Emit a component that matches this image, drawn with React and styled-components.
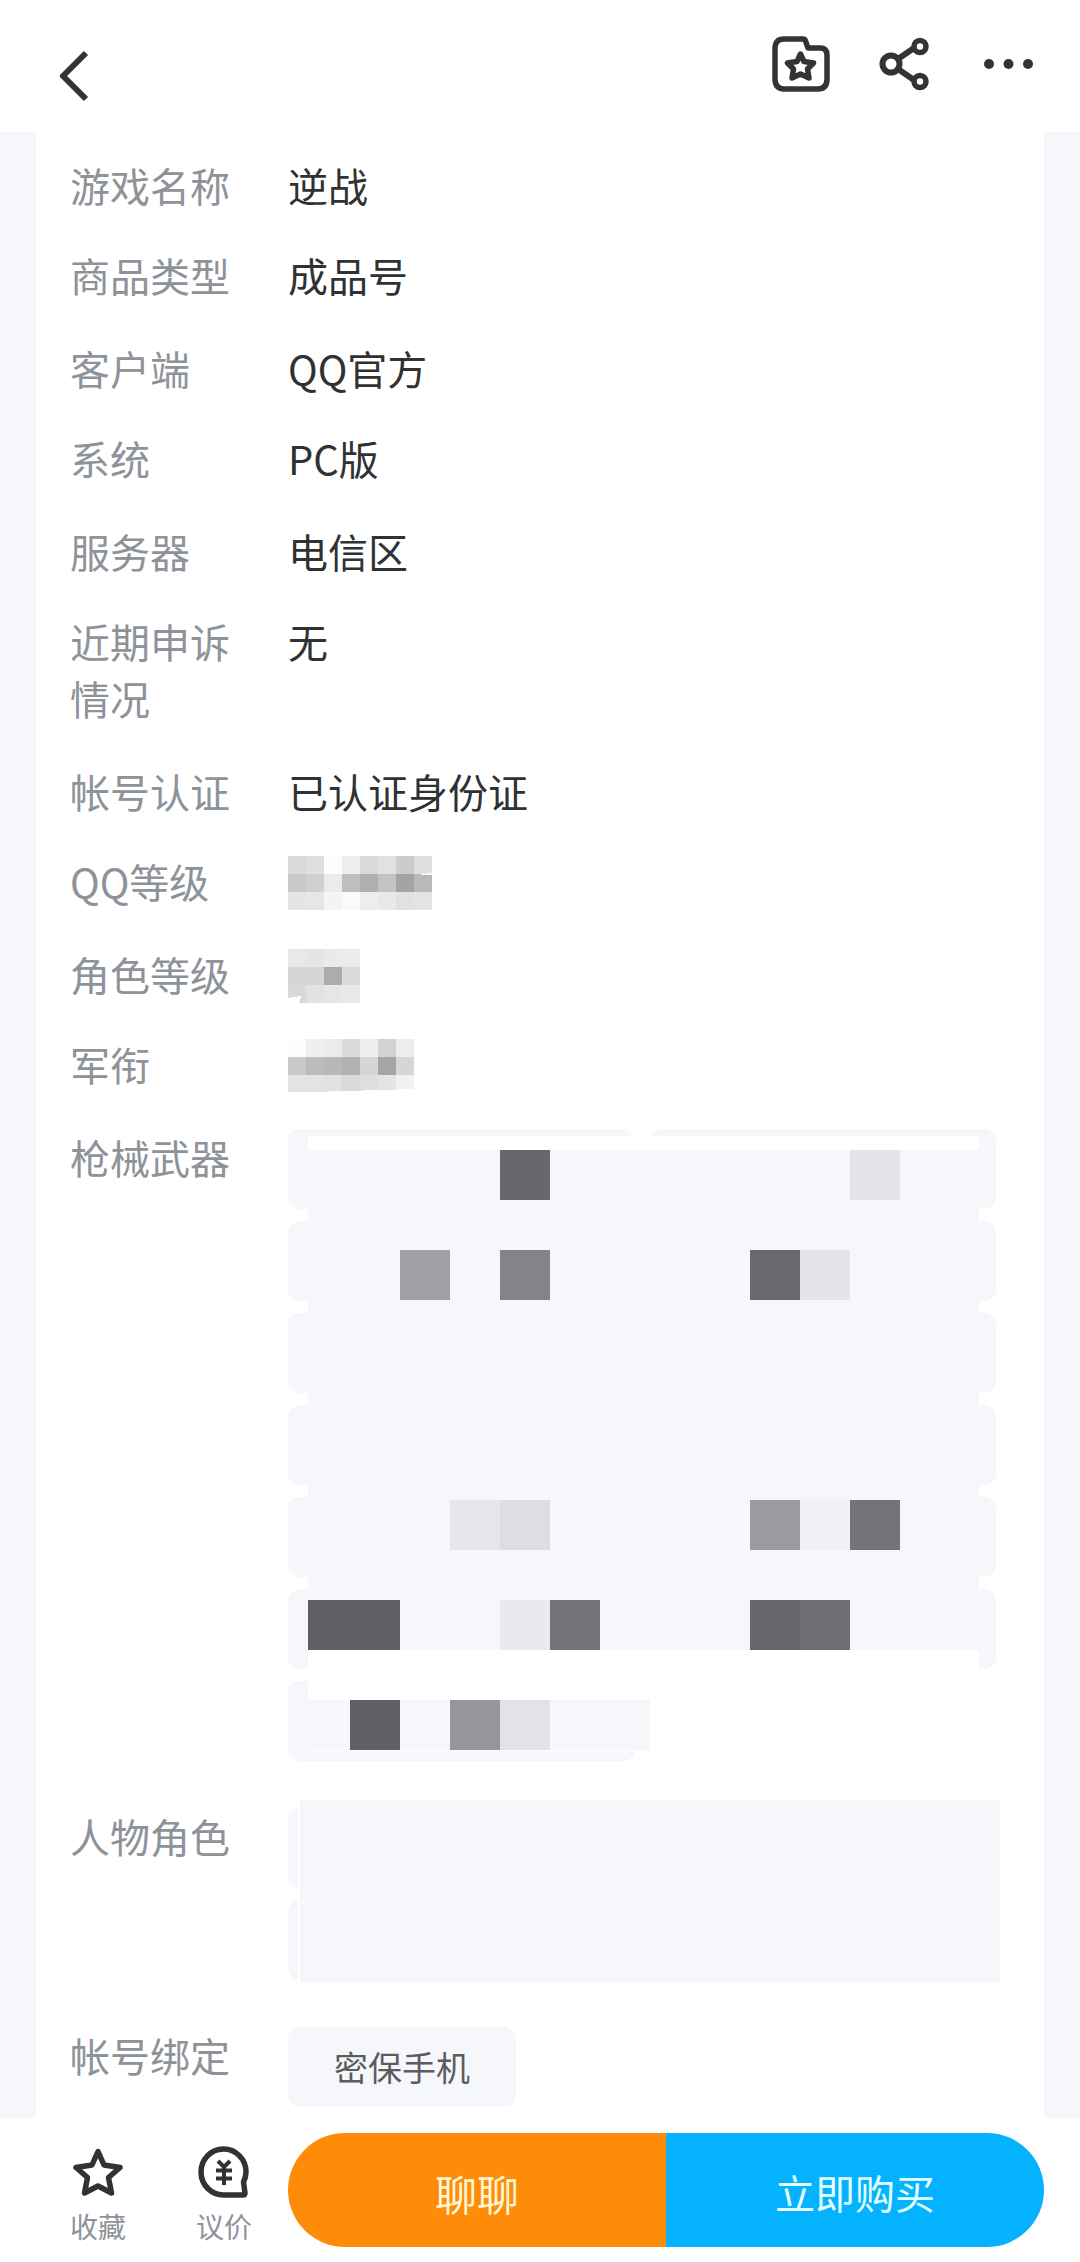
import { useState } from "react";
import styled, { createGlobalStyle } from "styled-components";

const GlobalStyle = createGlobalStyle`
  * {
    box-sizing: border-box;
  }

  body {
    margin: 0;
    background-color: #f6f7fb;
    font-family: "Noto Sans CJK SC", sans-serif;
  }
`;

const Page = styled.div`
  display: flex;
  flex-direction: column;
  min-height: 100vh;
`;

const Header = styled.header`
  display: flex;
  justify-content: space-between;
  align-items: flex-start;
  padding: 36px 42px 16px 50px;
  background-color: white;
`;

const IconButton = styled.button`
  display: flex;
  justify-content: center;
  align-items: center;
  width: ${(props) => props.$width}px;
  height: ${(props) => props.$height}px;
  padding: 0;
  border: none;
  background: none;
  color: #333;
  cursor: pointer;
`;

const Actions = styled.div`
  display: flex;
  gap: 46px;
`;

const Card = styled.main`
  flex: 1;
  margin: 0 36px;
  padding: 25px 48px 11px 34px;
  background-color: white;
`;

const InfoList = styled.dl`
  margin: 0;
`;

const Row = styled.div`
  display: flex;
  align-items: flex-start;
  padding-bottom: 33px;
  font-size: 40px;
  line-height: 57px;

  &:nth-child(even) {
    padding-bottom: 36px;
  }

  &&.chips {
    padding-bottom: 47px;
  }

  &&:last-child {
    padding-bottom: 0;
  }
`;

const Label = styled.dt`
  flex: none;
  width: 218px;
  padding-right: 48px;
  color: #8e9299;
`;

const Value = styled.dd`
  flex: 1;
  margin: 0;
  color: #303132;
`;

const Mosaic = styled.svg`
  display: block;
  margin-top: 3px;
`;

const ChipArea = styled.div`
  position: relative;
`;

const ChipGrid = styled.ul`
  display: grid;
  grid-template-columns: repeat(${(props) => props.$columns}, 1fr);
  gap: 12px 14px;
  margin: 0;
  padding: 0;
  list-style: none;
`;

const Chip = styled.li`
  height: 80px;
  border-radius: 12px;
  background-color: #f6f7fb;
`;

const TextChip = styled.span`
  display: inline-block;
  padding: 0 46px;
  border-radius: 12px;
  background-color: #f6f7fb;
  color: #5b5c5f;
  font-size: 34px;
  line-height: 80px;
  vertical-align: top;
`;

const WeaponMask = styled.svg`
  position: absolute;
  top: 7px;
  left: 20px;
`;

const RoleMask = styled.div`
  position: absolute;
  top: -8px;
  right: -4px;
  bottom: -2px;
  left: 10px;
  border-left: 2px solid white;
  background-color: #f6f7fb;
`;

const Footer = styled.footer`
  display: flex;
  align-items: flex-start;
  padding: 15px 36px;
  background-color: white;
`;

const ToolButton = styled.button`
  display: flex;
  flex-direction: column;
  align-items: center;
  gap: 8px;
  width: 126px;
  padding: 13px 2px 0 0;
  border: none;
  background: none;
  color: #303233;
  font-family: inherit;
  cursor: pointer;

  span {
    color: #8e9299;
    font-size: 28px;
    line-height: 40px;
  }
`;

const Pill = styled.div`
  display: flex;
  flex: 1;
  height: 114px;
  border-radius: 57px;
  overflow: hidden;
`;

const PillButton = styled.button`
  flex: 1;
  padding: 4px 0 0;
  border: none;
  background-color: ${(props) => (props.$buy ? "#05b2ff" : "#ff8c08")};
  color: ${(props) => (props.$buy ? "#e2ffff" : "#fff6d4")};
  font-family: inherit;
  font-size: ${(props) => (props.$buy ? 40 : 42)}px;
  cursor: pointer;
`;

const CELL = 18;

const qqCells = [
  ["#d9d9d9", "#dfdfdf", "#fdfdfd", "#ededed", "#dadada", "#e1e1e1", "#cccccc", "#dfdfdf"],
  ["#c8caca", "#cfd1d1", "#ebebeb", "#bebebe", "#afafaf", "#c3c3c3", "#a4a4a4", "#b9b9b9"],
  ["#e4e4e4", "#e6e6e6", "#f4f4f4", "#fafafa", "#ededed", "#e9e9e9", "#e1e1e1", "#e3e5e4"],
];

const roleCells = [
  ["#e8e8e8", "#e5e5e5", "#eaeaea", "#ececec"],
  ["#d6d6d6", "#d6d6d6", "#abadac", "#dadcdb"],
  ["#d9d9d9", "#e2e2e2", "#e6e6e6", "#e8eae9"],
];

const rankCells = [
  ["#fcfcfc", "#efefef", "#ebebeb", "#dadcdb", "#eceeed", "#d2d2d2", "#ededed"],
  ["#c8caca", "#bbbdbc", "#b8b8b8", "#b1b1b1", "#d6d6d6", "#a5a5a5", "#d6d6d6"],
  ["#e3e4e3", "#e2e4e3", "#e1e3e2", "#d9d9d9", "#dedede", "#e4e4e4", "#f1f1f1"],
];

// x, y, width, colour
const weaponCells = [
  [192, 14, 50, "#67686c"],
  [542, 14, 50, "#e4e5e9"],
  [92, 114, 50, "#a0a1a5"],
  [192, 114, 50, "#838487"],
  [442, 114, 50, "#69696e"],
  [492, 114, 50, "#e4e5e9"],
  [142, 364, 50, "#e6e7ea"],
  [192, 364, 50, "#dddee1"],
  [442, 364, 50, "#9b9ca0"],
  [492, 364, 50, "#f0f1f4"],
  [542, 364, 50, "#737478"],
  [0, 464, 92, "#5f6065"],
  [192, 464, 50, "#e9eaed"],
  [242, 464, 50, "#737478"],
  [442, 464, 50, "#67686c"],
  [492, 464, 50, "#6e6f73"],
  [42, 564, 50, "#5f6065"],
  [142, 564, 50, "#95969a"],
  [192, 564, 50, "#e2e3e6"],
];

const CellMosaic = ({ cells, children }) => (
  <Mosaic
    width={cells[0].length * CELL}
    height={cells.length * CELL}
    shapeRendering="crispEdges"
    aria-hidden="true"
  >
    {cells.map((line, y) =>
      line.map((color, x) => (
        <rect
          key={`${x}-${y}`}
          x={x * CELL}
          y={y * CELL}
          width={CELL}
          height={CELL}
          fill={color}
        />
      ))
    )}
    {children}
  </Mosaic>
);

const Chips = ({ count, columns }) => (
  <ChipGrid $columns={columns}>
    {Array.from({ length: count }, (_, index) => (
      <Chip key={index} />
    ))}
  </ChipGrid>
);

const dataset = [
  { label: "游戏名称", value: "逆战" },
  { label: "商品类型", value: "成品号" },
  { label: "客户端", value: "QQ官方" },
  { label: "系统", value: "PC版" },
  { label: "服务器", value: "电信区" },
  { label: "近期申诉情况", value: "无" },
  { label: "帐号认证", value: "已认证身份证" },
  {
    label: "QQ等级",
    value: (
      <CellMosaic cells={qqCells}>
        <path d="M130 19 L144 16.5 L144 18.5 Z" fill="white" />
      </CellMosaic>
    ),
  },
  {
    label: "角色等级",
    value: (
      <CellMosaic cells={roleCells}>
        <path d="M0 49 L13 47 L11 54 L0 54 Z" fill="white" />
      </CellMosaic>
    ),
  },
  {
    label: "军衔",
    value: (
      <CellMosaic cells={rankCells}>
        <path d="M0 53 L24 53 L126 50 L126 54 L0 54 Z" fill="white" />
      </CellMosaic>
    ),
  },
  {
    label: "枪械武器",
    chips: true,
    value: (
      <ChipArea>
        <Chips count={13} columns={2} />
        <WeaponMask
          width="671"
          height="616"
          shapeRendering="crispEdges"
          aria-hidden="true"
        >
          <rect width="671" height="14" fill="white" />
          <rect y="14" width="671" height="500" fill="#f6f7fb" />
          <rect y="514" width="671" height="50" fill="white" />
          <rect y="564" width="342" height="50" fill="#f6f7fb" />
          <rect y="614" width="342" height="1" fill="white" />
          {weaponCells.map(([x, y, width, color]) => (
            <rect
              key={`${x}-${y}`}
              x={x}
              y={y}
              width={width}
              height="50"
              fill={color}
            />
          ))}
        </WeaponMask>
      </ChipArea>
    ),
  },
  {
    label: "人物角色",
    chips: true,
    value: (
      <ChipArea>
        <Chips count={4} columns={2} />
        <RoleMask />
      </ChipArea>
    ),
  },
  { label: "帐号绑定", value: <TextChip>密保手机</TextChip> },
];

const BackIcon = () => (
  <svg width="48" height="80" fill="none" stroke="currentColor" strokeWidth="6">
    <path d="M36 17 L13 40 L36 63" strokeLinejoin="round" />
  </svg>
);

const FolderStarIcon = () => (
  <svg width="58" height="56" fill="none" stroke="currentColor" strokeLinejoin="round">
    <path
      d="M12 3 H31 Q33 3 33.5 5 L36 12 H48 Q55 12 55 19 V43 Q55 53 46 53 H12 Q3 53 3 43 V13 Q3 3 12 3 Z"
      strokeWidth="5.5"
    />
    <path
      d="M28.5 18 L32 25.5 L41.5 27 L35.5 33 L37 42 L28.5 38 L20 42 L21.5 33 L15.5 27 L25 25.5 Z"
      strokeWidth="5.5"
    />
  </svg>
);

const ShareIcon = () => (
  <svg width="58" height="56" fill="none" stroke="currentColor">
    <path d="M22 23 L38 12 M22 33 L38 44" strokeWidth="6" />
    <circle cx="15" cy="28" r="8.5" strokeWidth="6" fill="white" />
    <circle cx="44" cy="10.5" r="6" strokeWidth="5.5" fill="white" />
    <circle cx="44" cy="45.5" r="6" strokeWidth="5.5" fill="white" />
  </svg>
);

const MoreIcon = () => (
  <svg width="58" height="56" fill="currentColor">
    <circle cx="9" cy="28" r="5" />
    <circle cx="28.5" cy="28" r="5" />
    <circle cx="48" cy="28" r="5" />
  </svg>
);

const StarIcon = ({ filled }) => (
  <svg
    width="52"
    height="52"
    fill={filled ? "currentColor" : "none"}
    stroke="currentColor"
    strokeWidth="5.5"
    strokeLinejoin="round"
  >
    <path d="M26 5.5 L32 19 L48 21.5 L36.5 31.5 L39.5 47 L26 40 L12.5 47 L15.5 31.5 L4 21.5 L20 19 Z" />
  </svg>
);

const BargainIcon = () => (
  <svg width="52" height="52" fill="none" stroke="currentColor">
    <path
      d="M26 49 A22.5 23 0 1 1 48 26 Q48 31 45.5 36 L47 47 Q47 49 45 49 Z"
      strokeWidth="5.5"
      strokeLinejoin="round"
    />
    <path d="M20 15 L26 21 L32 15 M26 20 V39 M18 24.5 H34 M18 32.5 H34" strokeWidth="4" />
  </svg>
);

const App = () => {
  const [collected, setCollected] = useState(false);

  return (
    <Page>
      <GlobalStyle />
      <Header>
        <IconButton $width={48} $height={80} aria-label="返回">
          <BackIcon />
        </IconButton>
        <Actions>
          <IconButton $width={58} $height={56} aria-label="收藏夹">
            <FolderStarIcon />
          </IconButton>
          <IconButton $width={58} $height={56} aria-label="分享">
            <ShareIcon />
          </IconButton>
          <IconButton $width={58} $height={56} aria-label="更多">
            <MoreIcon />
          </IconButton>
        </Actions>
      </Header>

      <Card>
        <InfoList>
          {dataset.map((item) => (
            <Row key={item.label} className={item.chips ? "chips" : ""}>
              <Label>{item.label}</Label>
              <Value>{item.value}</Value>
            </Row>
          ))}
        </InfoList>
      </Card>

      <Footer>
        <ToolButton onClick={() => setCollected(!collected)}>
          <StarIcon filled={collected} />
          <span>收藏</span>
        </ToolButton>
        <ToolButton>
          <BargainIcon />
          <span>议价</span>
        </ToolButton>
        <Pill>
          <PillButton>聊聊</PillButton>
          <PillButton $buy>立即购买</PillButton>
        </Pill>
      </Footer>
    </Page>
  );
};

export default App;
